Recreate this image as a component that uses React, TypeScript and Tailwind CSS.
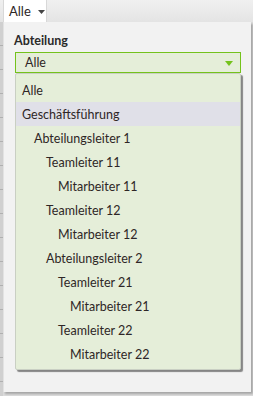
import React from "react";

const items: { label: string; indent: number; active?: boolean }[] = [
  { label: "Alle", indent: 0 },
  { label: "Geschäftsführung", indent: 0, active: true },
  { label: "Abteilungsleiter 1", indent: 12 },
  { label: "Teamleiter 11", indent: 24 },
  { label: "Mitarbeiter 11", indent: 36 },
  { label: "Teamleiter 12", indent: 24 },
  { label: "Mitarbeiter 12", indent: 36 },
  { label: "Abteilungsleiter 2", indent: 24 },
  { label: "Teamleiter 21", indent: 36 },
  { label: "Mitarbeiter 21", indent: 48 },
  { label: "Teamleiter 22", indent: 36 },
  { label: "Mitarbeiter 22", indent: 48 },
];

export default function App() {
  const font = { fontFamily: 'Lato, "Noto Sans", sans-serif' };
  return (
    <div
      className="relative w-[253px] h-[396px] overflow-hidden bg-[#dcdcdc] text-[#2e2626]"
      style={font}
    >
      {/* toolbar */}
      <div className="h-[22px] bg-gradient-to-b from-[#f0f0f0] to-[#e4e4e4] flex">
        <div className="ml-[3px] w-[44px] h-[22px] bg-white border-x border-[#d8d8d8] flex items-center pl-[5px] gap-[7px] text-[13px] pt-[1px]">
          <span>Alle</span>
          <svg width="7" height="4" viewBox="0 0 7 4">
            <path d="M0 0H7L3.5 4Z" fill="#444" />
          </svg>
        </div>
      </div>
      {/* table rows behind */}
      <div className="flex flex-col w-[3px]">
        {Array.from({ length: 16 }).map((_, i) => (
          <div key={i} className="h-[24px] border-b border-[#b0b0b0] bg-[#d0d0d0]" />
        ))}
      </div>

      {/* popover */}
      <div className="absolute left-[3px] top-[22px] w-[248px] h-[370px] bg-[#f2f2f2] border-l border-[#e2e2e2] shadow-[2px_2px_2px_rgba(0,0,0,0.25)] pt-[10px] pl-[10px] pr-[10px]">
        <div className="text-[12.5px] font-bold leading-[18px] text-[#2a2a2a]">Abteilung</div>
        <div className="mt-[2px] ml-[1px] w-[226px] h-[21px] border border-[#74c21c] bg-[#e5eed9] flex items-center justify-between pl-[9px] pr-[7px] text-[12.5px] pt-[1px]">
          <span>Alle</span>
          <svg width="8" height="5" viewBox="0 0 8 5">
            <path d="M0 0H8L4 5Z" fill="#74c21c" />
          </svg>
        </div>
        <div className="ml-[1px] w-[226px] h-[297px] bg-[#e5eed9] border border-[#c9cfc3] rounded-[2px] shadow-[2px_2px_1px_rgba(0,0,0,0.45)] pt-[4px] text-[12.5px]">
          {items.map((it, i) => (
            <div
              key={i}
              className={`h-[24px] flex items-center pt-[3px] ${it.active ? "bg-[#e0e0e8]" : ""}`}
              style={{ paddingLeft: 6 + it.indent }}
            >
              {it.label}
            </div>
          ))}
        </div>
      </div>
    </div>
  );
}
